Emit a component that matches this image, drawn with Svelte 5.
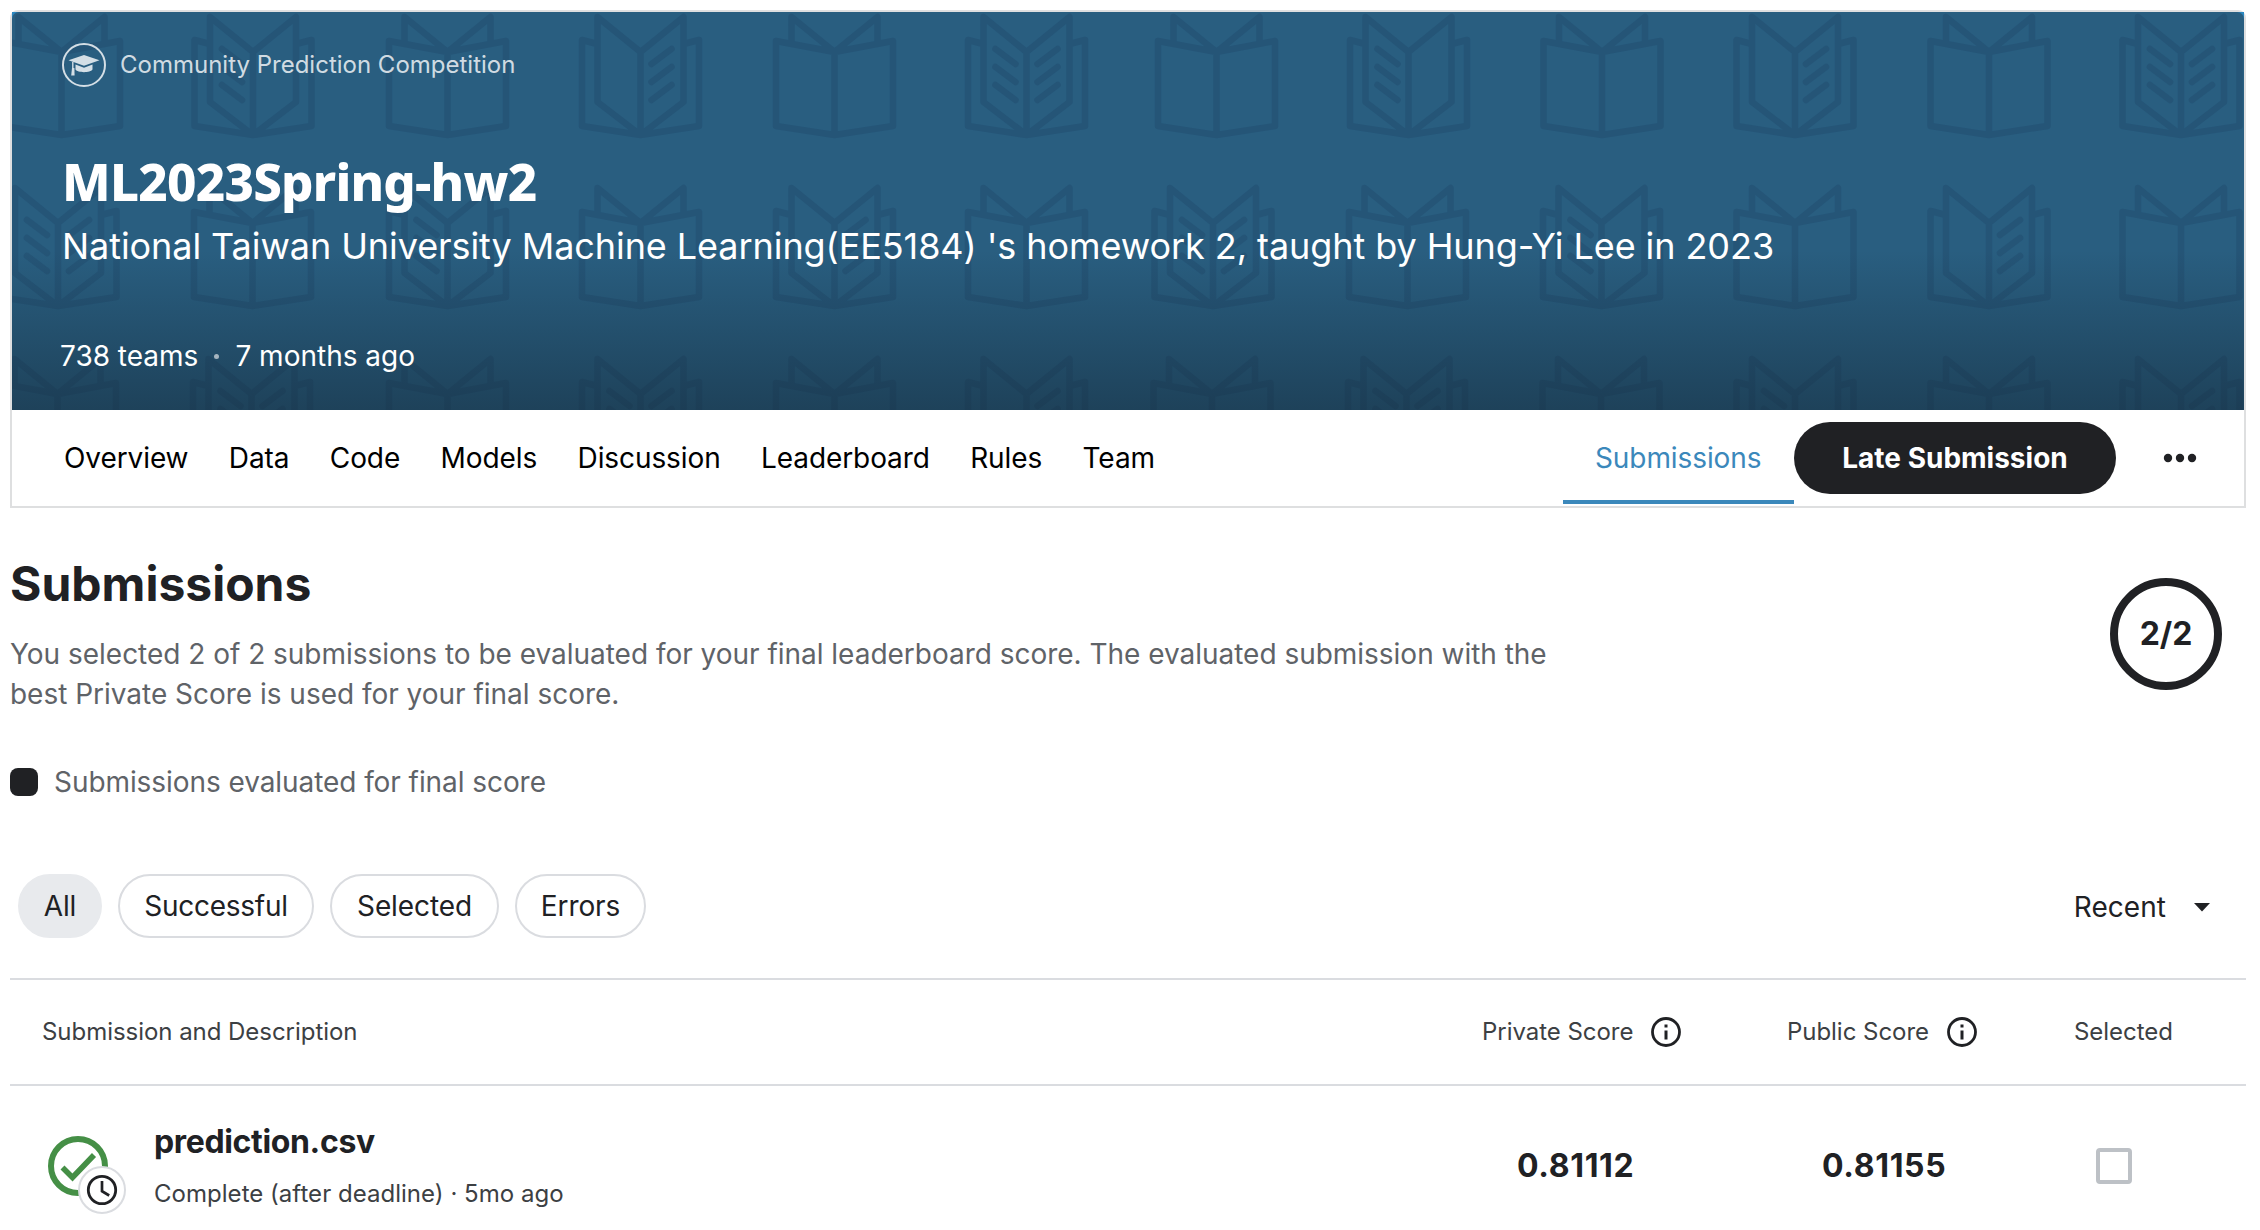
<script>
  // C: closed book, L / R / B: open book with text lines on the left, right or both pages
  const books = [
    ['C', 'L', 'C', 'R', 'C', 'B', 'C', 'L', 'C', 'R', 'C', 'B'],
    ['B', 'C', 'L', 'C', 'R', 'C', 'B', 'C', 'L', 'C', 'R', 'C'],
    ['C', 'B', 'C', 'B', 'C', 'R', 'C', 'B', 'C', 'L', 'C', 'R'],
  ];
  const centers = [
    [61.5, 253, 447.5, 640.5, 834.5, 1026.5, 1216.5, 1408.5, 1602, 1795, 1989, 2181],
    [58, 252.5, 447.5, 640.5, 834.5, 1026.5, 1213, 1407.5, 1601.5, 1795, 1989, 2181],
    [57.5, 251.5, 447.5, 640.5, 834.5, 1026.5, 1212, 1406.5, 1601, 1795, 1989, 2181],
  ];
  const tabs = ['Overview', 'Data', 'Code', 'Models', 'Discussion', 'Leaderboard', 'Rules', 'Team'];
  const filters = ['All', 'Successful', 'Selected', 'Errors'];
  const marks = [0, 18, 36];
</script>

{#snippet info()}
  <svg class="info" width="30" height="30" viewBox="0 0 30 30">
    <circle cx="15" cy="15" r="13.5" fill="none" stroke="#202124" stroke-width="2.8" />
    <path d="M15 13.5V22.5M15 7.4V10.5" stroke="#202124" stroke-width="3" />
  </svg>
{/snippet}

<main>
  <section class="card">
    <header class="hero">
      <svg class="pattern" viewBox="12 12 2232 398">
        {#each books as row, r}
          {#each row as kind, c}
            <g transform="translate({centers[r][c]} {16 + r * 171})">
              {#if kind === 'C'}
                <path d="M-58.5 25L0 36L58.5 25V110L0 119L-58.5 110ZM0 36V119M-43 27V1L0 36L43 1V27" />
              {:else}
                <path d="M-43 1L0 36L43 1V86L0 119L-43 86ZM0 36V119M-43 28L-58.5 24V110L0 119L58.5 110V24L43 28" />
                {#each marks as m}
                  {#if kind !== 'R'}<path d="M-31 {33 + m}L-11 {48 + m}" />{/if}
                  {#if kind !== 'L'}<path d="M31 {33 + m}L11 {48 + m}" />{/if}
                {/each}
              {/if}
            </g>
          {/each}
        {/each}
      </svg>
      <div class="kind">
        <svg width="44" height="44" viewBox="0 0 44 44">
          <circle cx="22" cy="22" r="21" fill="none" stroke="currentColor" stroke-width="2" />
          <path d="M22 12L37.5 17.2L22 22.8L6.5 17.2Z" fill="currentColor" />
          <path d="M13.5 21.5L22 24.8L30.5 21.5V26.5C28.5 30 15.5 30 13.5 26.5Z" fill="currentColor" />
          <path d="M10.8 19V25" stroke="currentColor" stroke-width="1.4" />
          <path d="M10 25h2.4L12.6 32.5H9.2Z" fill="currentColor" />
        </svg>
        <span>Community Prediction Competition</span>
      </div>
      <h1>ML2023Spring-hw2</h1>
      <p class="subtitle">National Taiwan University Machine Learning(EE5184) 's homework 2, taught by Hung-Yi Lee in 2023</p>
      <div class="meta"><span>738 teams</span><i></i><span>7 months ago</span></div>
    </header>
    <nav>
      <div class="tabs">
        {#each tabs as tab}<a href="#{tab}">{tab}</a>{/each}
      </div>
      <a class="active" href="#submissions">Submissions</a>
      <button class="late">Late Submission</button>
      <svg class="more" width="36" height="12" viewBox="0 0 36 12" fill="#202124">
        <circle cx="6" cy="6" r="4.2" /><circle cx="18" cy="6" r="4.2" /><circle cx="30" cy="6" r="4.2" />
      </svg>
    </nav>
  </section>

  <section class="intro">
    <div>
      <h2>Submissions</h2>
      <p>You selected 2 of 2 submissions to be evaluated for your final leaderboard score. The evaluated submission with the<br />best Private Score is used for your final score.</p>
    </div>
    <div class="ring">2/2</div>
  </section>
  <div class="legend"><i></i><span>Submissions evaluated for final score</span></div>

  <div class="filters">
    {#each filters as f, i}<button class:on={i === 0}>{f}</button>{/each}
    <div class="sort">
      <span>Recent</span>
      <svg width="16" height="9" viewBox="0 0 16 9"><path d="M0 0H16L8 8.5Z" fill="#202124" /></svg>
    </div>
  </div>

  <div class="row head">
    <span>Submission and Description</span>
    <span class="col">Private Score {@render info()}</span>
    <span class="col">Public Score {@render info()}</span>
    <span>Selected</span>
  </div>
  <div class="row item">
    <div class="file">
      <svg width="80" height="80" viewBox="0 0 80 80">
        <circle cx="30" cy="30" r="27" fill="none" stroke="#458f46" stroke-width="6" />
        <path d="M14.5 31.5L24.5 41.5L46 19" fill="none" stroke="#458f46" stroke-width="5.6" />
        <circle cx="54" cy="54" r="23" fill="#fff" stroke="#dadce0" stroke-width="2" />
        <circle cx="54" cy="54" r="13.7" fill="none" stroke="#202124" stroke-width="2.8" />
        <path d="M54 45V55.2L61.2 59.5" fill="none" stroke="#202124" stroke-width="2.7" />
      </svg>
      <div class="name">
        <strong>prediction.csv</strong>
        <span>Complete (after deadline) · 5mo ago</span>
      </div>
    </div>
    <b>0.81112</b>
    <b>0.81155</b>
    <span class="box"></span>
  </div>
</main>

<style>
  :global(body) { background: #fff; overflow: hidden; }
  main {
    box-sizing: border-box;
    width: 2260px;
    height: 1230px;
    padding: 10px 14px 0 10px;
    overflow: hidden;
    font: 28px/40px Inter, sans-serif;
    color: #202124;
  }
  a { color: inherit; text-decoration: none; }
  button { font: inherit; color: inherit; cursor: pointer; }
  .card { box-sizing: border-box; height: 498px; border: 2px solid #dedfe0; border-radius: 8px 8px 0 0; }
  .hero {
    position: relative;
    isolation: isolate;
    box-sizing: border-box;
    height: 398px;
    padding: 31px 50px 0;
    overflow: hidden;
    background: #2b87c0;
    color: #fff;
  }
  .hero::before {
    content: '';
    position: absolute;
    inset: 0;
    border-radius: 7px 7px 0 0;
    background: #295e80;
  }
  .hero::after {
    content: '';
    position: absolute;
    inset: 0;
    background: linear-gradient(180deg, rgba(20, 40, 55, 0) 60%, rgba(20, 40, 55, .52) 100%);
  }
  .hero > :not(.pattern) { position: relative; z-index: 1; }
  .pattern {
    position: absolute;
    inset: 0;
    width: 100%;
    height: 100%;
    fill: none;
    stroke: #255577;
    stroke-width: 6.5;
    stroke-linejoin: round;
    stroke-linecap: round;
  }
  .kind { display: flex; align-items: center; gap: 14px; height: 44px; font-size: 24px; color: rgba(255, 255, 255, .8); }
  .kind svg { margin-top: -1px; }
  h1 { margin: 59px 0 0; font: 800 51px/70px "Noto Sans", sans-serif; letter-spacing: -.75px; }
  .subtitle { margin: 0; font-size: 36px; line-height: 60px; letter-spacing: -.075px; white-space: nowrap; }
  .meta { display: flex; align-items: center; margin: 60px 0 0 -2px; line-height: 40px; }
  .meta i { width: 5px; height: 5px; margin: 0 16px; border-radius: 50%; background: #a5b4bf; }
  nav { display: flex; align-items: center; box-sizing: border-box; height: 96px; padding: 0 46px 0 52px; color: #000; }
  .tabs { display: flex; gap: 40.4px; margin-right: auto; letter-spacing: -.09px; }
  .active {
    box-sizing: border-box;
    width: 231px;
    height: 92px;
    padding: 26px 0 0 32px;
    border-bottom: 4px solid #3b88bb;
    color: #3b88bb;
    letter-spacing: -.09px;
  }
  .late { width: 322px; height: 72px; padding: 0; border: 0; border-radius: 36px; background: #202124; color: #fff; font-weight: 700; }
  .more { margin-left: 46px; }
  .intro { display: flex; justify-content: space-between; height: 220px; box-sizing: border-box; padding: 46px 24px 0 0; }
  h2 { margin: 0; font-size: 48px; line-height: 60px; font-weight: 700; }
  .intro p { margin: 20px 0 0; color: #5f6368; letter-spacing: -.02px; white-space: nowrap; }
  .ring {
    box-sizing: border-box;
    width: 112px;
    height: 112px;
    margin-top: 24px;
    border: 8px solid #202124;
    border-radius: 50%;
    font-size: 32px;
    font-weight: 700;
    line-height: 96px;
    text-align: center;
  }
  .legend { display: flex; align-items: center; gap: 16px; height: 108px; color: #5f6368; letter-spacing: -.07px; }
  .legend i { width: 28px; height: 28px; border-radius: 8px; background: #202124; }
  .filters { display: flex; gap: 16px; box-sizing: border-box; height: 142px; padding: 38px 36px 0 8px; letter-spacing: -.1px; }
  .filters button {
    box-sizing: border-box;
    height: 64px;
    padding: 0;
    border: 2px solid #dadce0;
    border-radius: 32px;
    background: #fff;
    letter-spacing: inherit;
  }
  .filters button:nth-child(1) { width: 84px; }
  .filters button:nth-child(2) { width: 196px; letter-spacing: -.25px; }
  .filters button:nth-child(3) { width: 169px; }
  .filters button:nth-child(4) { width: 131px; }
  .filters .on { border-color: #e8eaed; background: #e8eaed; }
  .sort { display: flex; align-items: center; gap: 28px; height: 66px; margin-left: auto; letter-spacing: .05px; }
  .row { display: grid; grid-template-columns: 1472px 305px 287px auto; align-items: center; border-top: 2px solid #dadce0; }
  .head { height: 104px; font-size: 24px; color: #3c4043; letter-spacing: -.04px; }
  .head > :first-child { padding-left: 32px; }
  .col { display: flex; align-items: center; gap: 18px; }
  .item { height: 160px; }
  .file { display: flex; align-items: center; gap: 26px; padding: 20px 0 0 38px; }
  .name { display: flex; flex-direction: column; margin-top: -20px; }
  .name strong { font-size: 32px; line-height: 50px; font-weight: 650; letter-spacing: -.35px; }
  .name span { margin-top: 6px; font-size: 24px; line-height: 42px; color: #3c4043; letter-spacing: .03px; }
  b { padding-left: 35px; font-size: 32px; font-weight: 700; letter-spacing: .65px; }
  .box { box-sizing: border-box; width: 36px; height: 36px; margin-left: 22px; border: 4px solid #bdc1c6; border-radius: 4px; }
</style>
